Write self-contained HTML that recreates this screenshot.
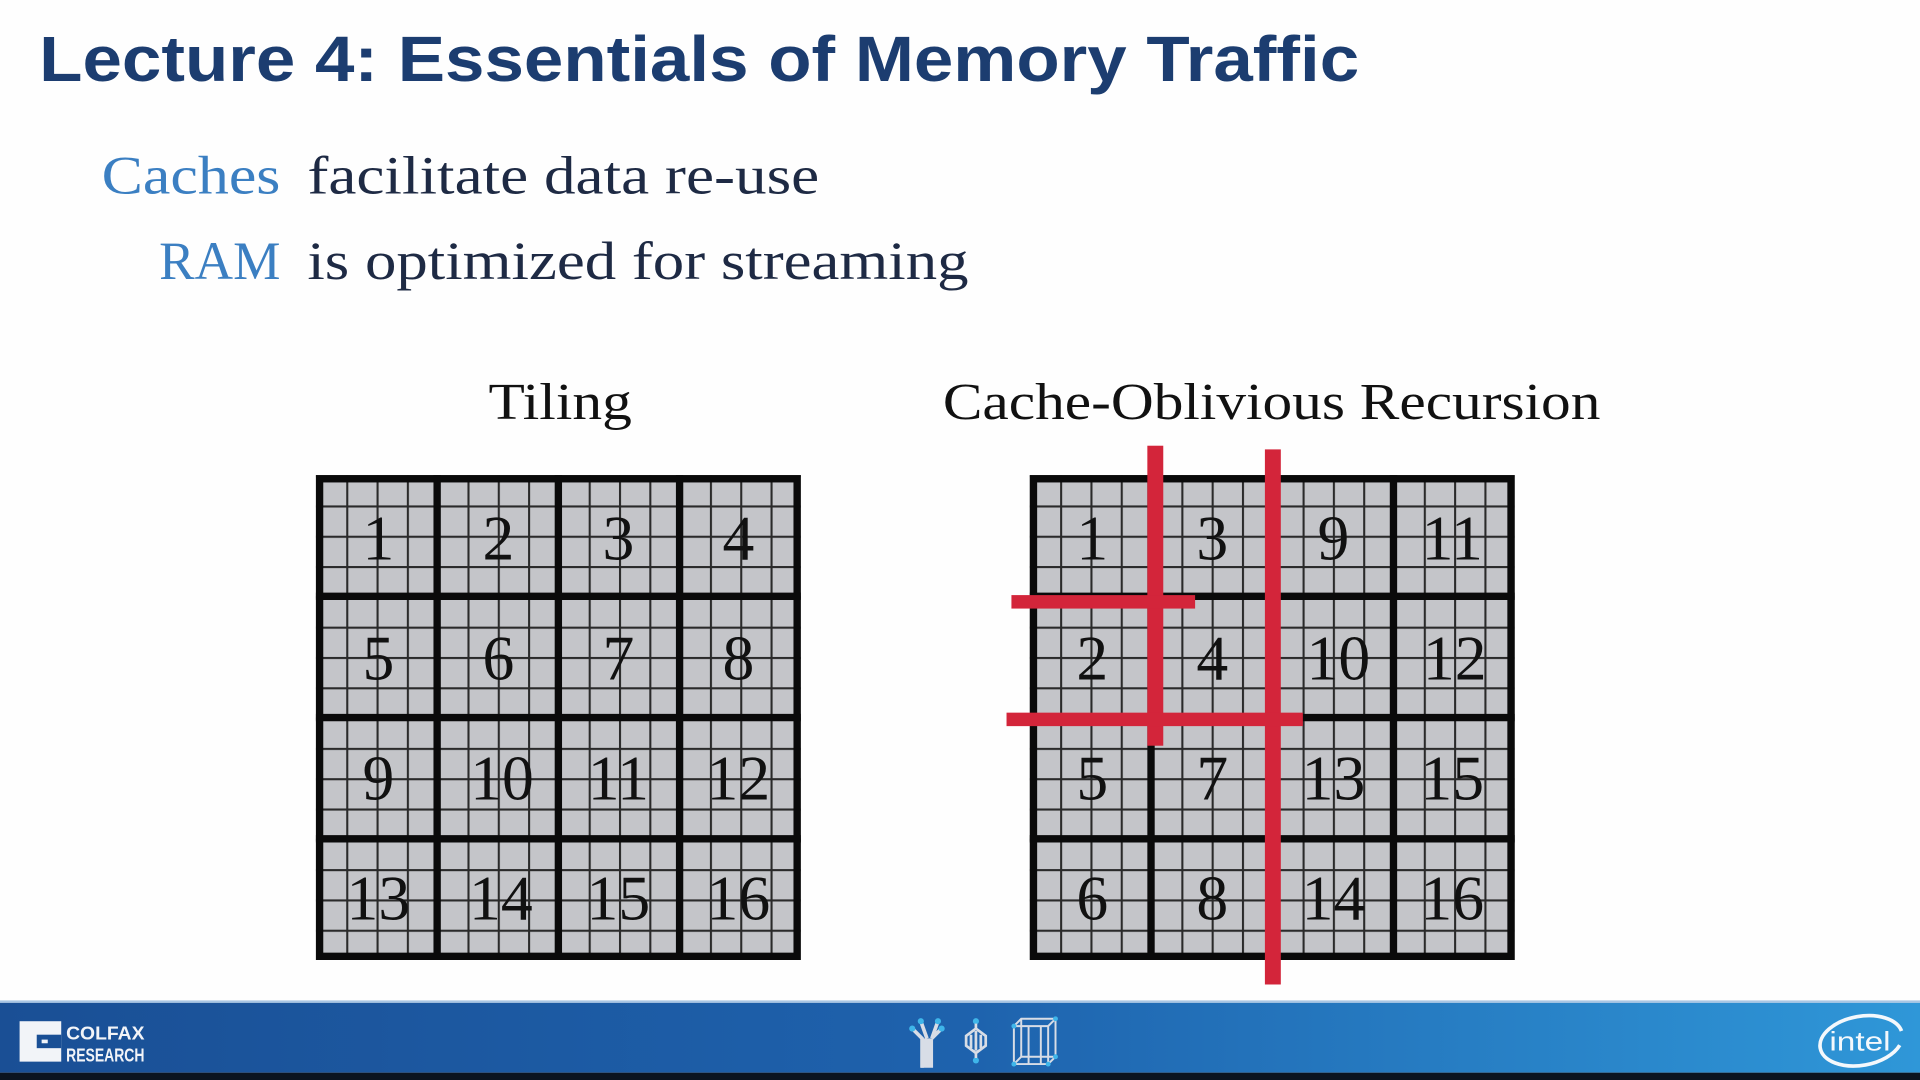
<!DOCTYPE html>
<html><head><meta charset="utf-8"><style>
html,body{margin:0;padding:0;background:#fff;width:1920px;height:1080px;overflow:hidden}
svg{display:block}
</style></head><body>
<svg width="1920" height="1080" viewBox="0 0 1568 882" xmlns="http://www.w3.org/2000/svg">
<defs>
<pattern id="sub" x="258" y="388" width="24.75" height="24.75" patternUnits="userSpaceOnUse">
<rect width="24.75" height="24.75" fill="#c4c5c9"/>
<path d="M0 0.8H24.75M0.8 0V24.75" stroke="#2a2a2a" stroke-width="1.8"/>
</pattern>
<pattern id="sub2" x="841" y="388" width="24.75" height="24.75" patternUnits="userSpaceOnUse">
<rect width="24.75" height="24.75" fill="#c4c5c9"/>
<path d="M0 0.8H24.75M0.8 0V24.75" stroke="#2a2a2a" stroke-width="1.8"/>
</pattern>
<linearGradient id="bar" x1="0" x2="1" y1="0" y2="0">
<stop offset="0" stop-color="#1a4f95"/><stop offset="0.5" stop-color="#1e62ad"/><stop offset="1" stop-color="#2f97d8"/>
</linearGradient>
</defs>
<rect width="1568" height="882" fill="#fefefe"/>
<text x="32" y="66" font-family="Liberation Sans, sans-serif" font-weight="bold" font-size="52" fill="#1c3d70" textLength="1078" lengthAdjust="spacingAndGlyphs">Lecture 4: Essentials of Memory Traffic</text>
<g font-family="Liberation Serif, serif" font-size="44">
<text x="229" y="158" text-anchor="end" fill="#3b7fc2" textLength="146" lengthAdjust="spacingAndGlyphs">Caches</text>
<text x="251" y="158" fill="#1e2a44" textLength="418" lengthAdjust="spacingAndGlyphs">facilitate data re-use</text>
<text x="229" y="228" text-anchor="end" fill="#3b7fc2" textLength="99" lengthAdjust="spacingAndGlyphs">RAM</text>
<text x="251" y="228" fill="#1e2a44" textLength="540" lengthAdjust="spacingAndGlyphs">is optimized for streaming</text>
<text x="399" y="342" fill="#111" font-size="42" textLength="117" lengthAdjust="spacingAndGlyphs">Tiling</text>
<text x="770" y="342" fill="#111" font-size="42" textLength="537" lengthAdjust="spacingAndGlyphs">Cache-Oblivious Recursion</text>
</g>
<!-- left grid -->
<rect x="258" y="388" width="396" height="396" fill="url(#sub)"/>
<g stroke="#0a0a0a" stroke-width="6" fill="none">
<rect x="261" y="391" width="390" height="390"/>
<path d="M357 388V784M456 388V784M555 388V784M258 487H654M258 586H654M258 685H654"/>
</g>
<g font-family="Liberation Serif, serif" font-size="52" fill="#111" text-anchor="middle">
<text x="309" y="457">1</text><text x="407" y="457">2</text><text x="505" y="457">3</text><text x="603" y="457">4</text>
<text x="309" y="555">5</text><text x="407" y="555">6</text><text x="505" y="555">7</text><text x="603" y="555">8</text>
<text x="309" y="653">9</text><text x="410" y="653">10</text><text x="505" y="653">11</text><text x="603" y="653">12</text>
<text x="309" y="751">13</text><text x="409" y="751">14</text><text x="505" y="751">15</text><text x="603" y="751">16</text>
</g>
<!-- right grid -->
<rect x="841" y="388" width="396" height="396" fill="url(#sub2)"/>
<g stroke="#0a0a0a" stroke-width="6" fill="none">
<rect x="844" y="391" width="390" height="390"/>
<path d="M940 388V784M1039 388V784M1138 388V784M841 487H1237M841 586H1237M841 685H1237"/>
</g>
<g font-family="Liberation Serif, serif" font-size="52" fill="#111" text-anchor="middle">
<text x="892" y="457">1</text><text x="990" y="457">3</text><text x="1089" y="457">9</text><text x="1186" y="457">11</text>
<text x="892" y="555">2</text><text x="990" y="555">4</text><text x="1093" y="555">10</text><text x="1188" y="555">12</text>
<text x="892" y="653">5</text><text x="990" y="653">7</text><text x="1089" y="653">13</text><text x="1186" y="653">15</text>
<text x="892" y="751">6</text><text x="990" y="751">8</text><text x="1089" y="751">14</text><text x="1186" y="751">16</text>
</g>
<g fill="#d3253a">
<rect x="937" y="364" width="13" height="245"/>
<rect x="1033" y="367" width="13" height="437"/>
<rect x="826" y="486" width="150" height="11"/>
<rect x="822" y="582" width="242" height="11"/>
</g>
<!-- footer -->
<rect x="0" y="817" width="1568" height="2" fill="#a9c6e4"/>
<rect x="0" y="819" width="1568" height="57" fill="url(#bar)"/>
<rect x="0" y="876" width="1568" height="6" fill="#0b1420"/>
<!-- colfax -->
<rect x="16" y="834" width="34" height="33" fill="#f2f4f8"/>
<rect x="30" y="845" width="20" height="11" fill="#1a4f95"/>
<rect x="34" y="849" width="5" height="3" fill="#f2f4f8"/>
<g font-family="Liberation Sans, sans-serif" font-weight="bold" fill="#f2f4f8" font-size="15">
<text x="54" y="849" textLength="64" lengthAdjust="spacingAndGlyphs">COLFAX</text>
<text x="54" y="867" textLength="64" lengthAdjust="spacingAndGlyphs">RESEARCH</text>
</g>
<!-- center icons -->
<g>
<path d="M753 872V848L745 840M757 848L752 834M761 848L766 834M761 848L769 840" stroke="#d8dde6" stroke-width="3" fill="none"/>
<rect x="752" y="848" width="10" height="24" fill="#d8dde6"/>
<g fill="#3fb6ea"><circle cx="745" cy="840" r="2.5"/><circle cx="752" cy="834" r="2.5"/><circle cx="766" cy="834" r="2.5"/><circle cx="769" cy="840" r="2.5"/><circle cx="797" cy="834" r="2.5"/><circle cx="797" cy="866" r="2.5"/></g>
<path d="M797 836V840L789 846V854L797 860V864M797 840L805 846V854L797 860M793 845V856M797 842V858M801 845V856" stroke="#d8dde6" stroke-width="2.2" fill="none"/>
<path d="M828 838L834 832H862V863L856 869H828ZM828 838H856V869M856 838L862 832M834 832V863L828 869M834 863H862M840 838V869M850 838V869" stroke="#d8dde6" stroke-width="1.6" fill="none"/>
<g fill="#3fb6ea"><circle cx="828" cy="838" r="2"/><circle cx="862" cy="832" r="2"/><circle cx="856" cy="869" r="2"/><circle cx="828" cy="869" r="2"/><circle cx="862" cy="863" r="2"/></g>
</g>
<!-- intel -->
<ellipse cx="1520" cy="850" rx="34" ry="20" transform="rotate(-10 1520 850)" fill="none" stroke="#f4f8fc" stroke-width="3" stroke-dasharray="160 30" stroke-dashoffset="-10"/>
<text x="1519" y="858" text-anchor="middle" font-family="Liberation Sans, sans-serif" font-size="22" fill="#f4f8fc" textLength="50" lengthAdjust="spacingAndGlyphs">intel</text>
</svg>
</body></html>
